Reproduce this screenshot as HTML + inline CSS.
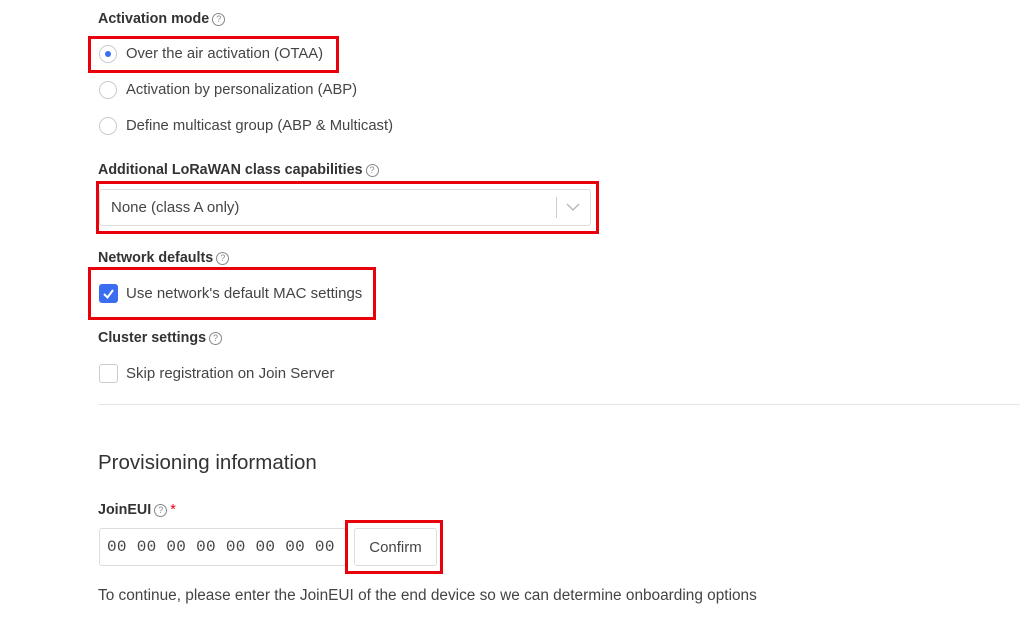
<!DOCTYPE html>
<html><head><style>
body{margin:0;width:1031px;height:635px;background:#fff;font-family:"Liberation Sans",sans-serif;color:#333;position:relative;overflow:hidden}
.a{position:absolute;white-space:nowrap}
.lbl{font-size:14.3px;font-weight:bold;color:#333}
.t{font-size:15px;color:#444}
.q{display:inline-block;width:11px;height:11px;border:1px solid #888;border-radius:50%;font-size:9px;line-height:11px;text-align:center;color:#888;font-weight:normal;vertical-align:1px;margin-left:3px}
.red{position:absolute;border:3px solid #e8000b;box-sizing:border-box}
.radio{position:absolute;width:18px;height:18px;border:1px solid #ccc;border-radius:50%;box-sizing:border-box;background:#fff}
.cb{position:absolute;width:19px;height:19px;border:1px solid #ccc;border-radius:3px;box-sizing:border-box}
</style></head><body>
<div class="a lbl" style="left:98px;top:11px">Activation mode<span class="q">?</span></div>
<div class="red" style="left:88px;top:36px;width:251px;height:37px"></div>
<div class="radio" style="left:99px;top:45px"><div style="position:absolute;left:5px;top:5px;width:6px;height:6px;border-radius:50%;background:#3b6df0"></div></div>
<div class="a t" style="left:126px;top:46px;font-size:14.8px">Over the air activation (OTAA)</div>
<div class="radio" style="left:99px;top:81px"></div>
<div class="a t" style="left:126px;top:82px;font-size:14.8px">Activation by personalization (ABP)</div>
<div class="radio" style="left:99px;top:117px"></div>
<div class="a t" style="left:126px;top:118px;font-size:14.8px">Define multicast group (ABP &amp; Multicast)</div>

<div class="a lbl" style="left:98px;top:162px">Additional LoRaWAN class capabilities<span class="q">?</span></div>
<div class="red" style="left:96px;top:181px;width:503px;height:53px"></div>
<div class="a" style="left:99px;top:189px;width:492px;height:37px;border:1px solid #ddd;border-radius:3px;box-sizing:border-box"></div>
<div class="a t" style="left:111px;top:199px">None (class A only)</div>
<div class="a" style="left:556px;top:197px;width:1px;height:21px;background:#ccc"></div>
<svg class="a" style="left:566px;top:202px" width="14" height="10"><path d="M1 2 L7 8 L13 2" fill="none" stroke="#bbb" stroke-width="1.5"/></svg>

<div class="a lbl" style="left:98px;top:250px">Network defaults<span class="q">?</span></div>
<div class="red" style="left:88px;top:267px;width:288px;height:53px"></div>
<div class="cb" style="left:99px;top:284px;background:#3b6df0;border-color:#3b6df0"><svg width="17" height="17" style="position:absolute;left:0;top:0"><path d="M4 9 L7.5 12.5 L13 5" fill="none" stroke="#fff" stroke-width="2"/></svg></div>
<div class="a t" style="left:126px;top:285px">Use network's default MAC settings</div>

<div class="a lbl" style="left:98px;top:330px">Cluster settings<span class="q">?</span></div>
<div class="cb" style="left:99px;top:364px"></div>
<div class="a t" style="left:126px;top:365px">Skip registration on Join Server</div>

<div class="a" style="left:98px;top:404px;width:922px;height:1px;background:#e6e6e6"></div>

<div class="a" style="left:98px;top:451px;font-size:20.5px;color:#333;font-weight:500">Provisioning information</div>

<div class="a lbl" style="left:98px;top:502px">JoinEUI<span class="q">?</span><span style="color:#e8000b;font-weight:normal;margin-left:3px">*</span></div>
<div class="a" style="left:99px;top:528px;width:247px;height:38px;border:1px solid #ddd;border-radius:3px;box-sizing:border-box"></div>
<div class="a" style="left:107px;top:538px;font-family:'Liberation Mono',monospace;font-size:16px;color:#444;letter-spacing:0.3px">00 00 00 00 00 00 00 00</div>
<div class="red" style="left:345px;top:520px;width:98px;height:54px"></div>
<div class="a" style="left:354px;top:528px;width:83px;height:38px;border:1px solid #ddd;border-radius:3px;box-sizing:border-box;font-size:15px;color:#444;text-align:center;line-height:38px">Confirm</div>

<div class="a t" style="left:98px;top:587px;font-size:15.4px">To continue, please enter the JoinEUI of the end device so we can determine onboarding options</div>
</body></html>
